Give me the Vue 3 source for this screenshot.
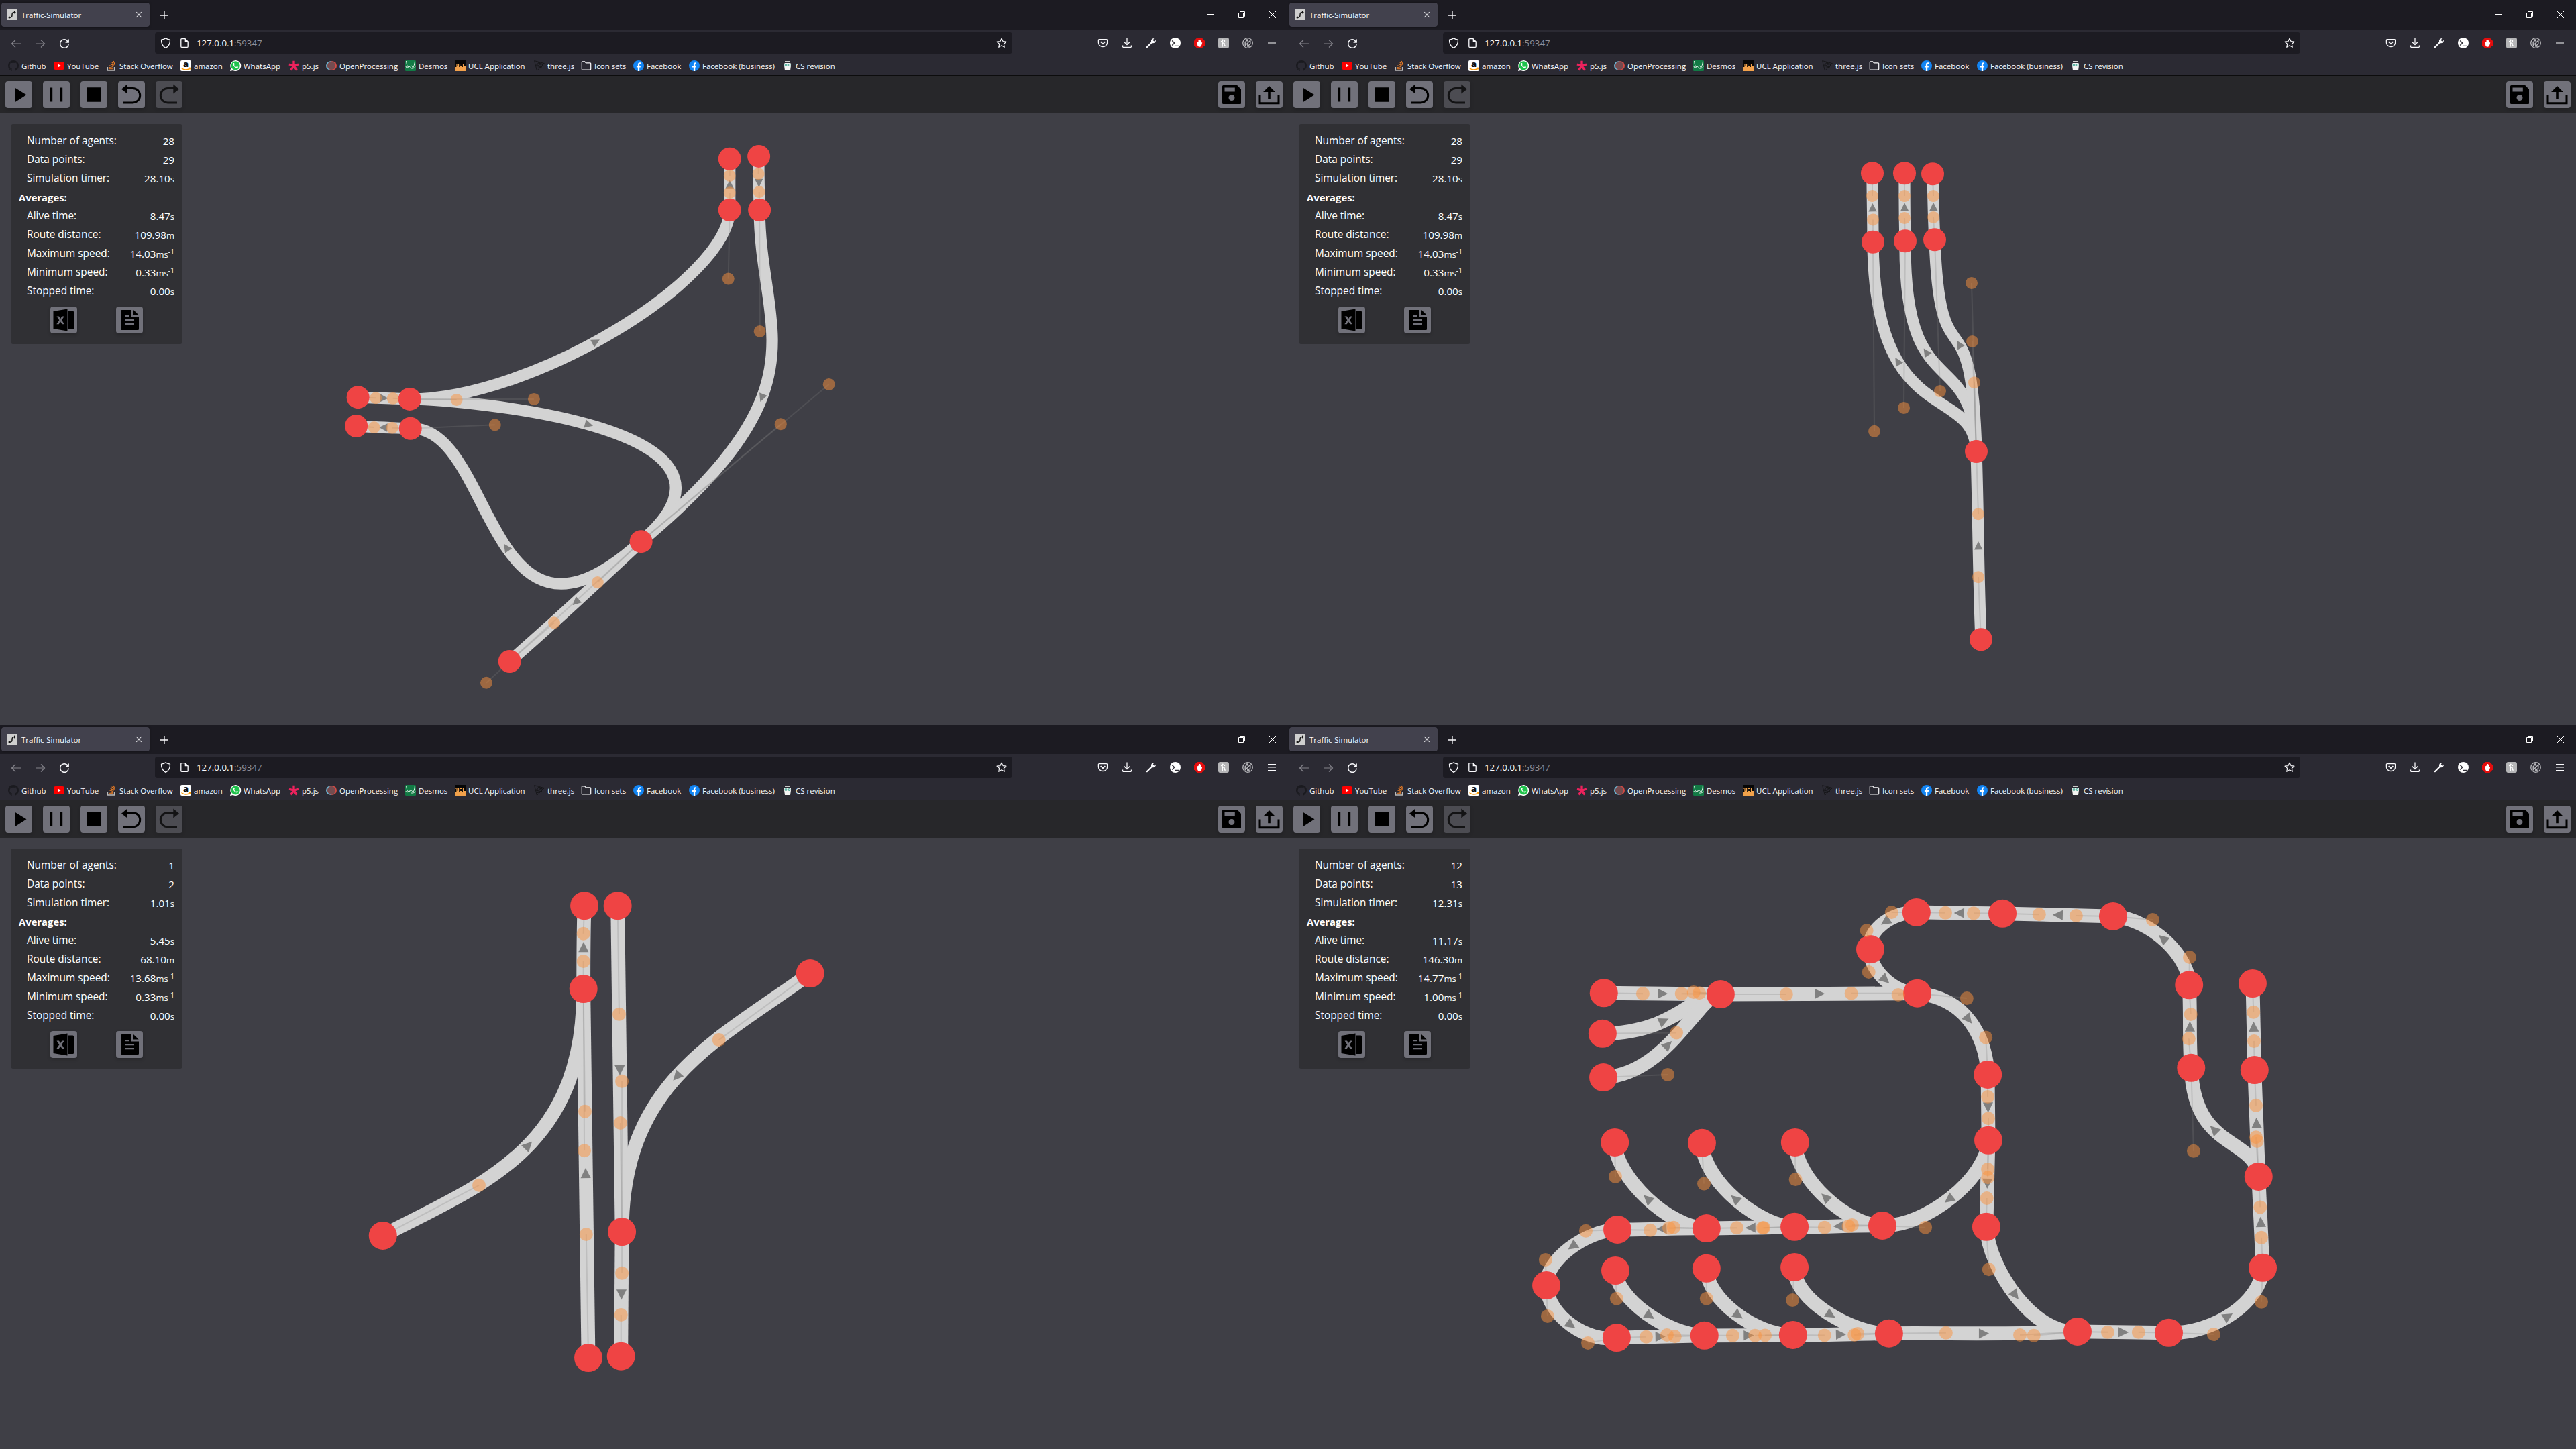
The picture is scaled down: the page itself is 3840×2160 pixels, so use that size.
<script setup>
const tools = ['play', 'pause', 'stop', 'undo', 'redo']
const files = ['save', 'share']
const extensions = ['pocket', 'download', 'wrench', 'terminal', 'block', 'honey', 'link', 'menu']

const bookmarks = [
  { icon: 'github', label: 'Github', width: 68 },
  { icon: 'youtube', label: 'YouTube', width: 78 },
  { icon: 'stack', label: 'Stack Overflow', width: 111 },
  { icon: 'amazon', label: 'amazon', width: 74 },
  { icon: 'whatsapp', label: 'WhatsApp', width: 87 },
  { icon: 'p5', label: 'p5.js', width: 56 },
  { icon: 'openproc', label: 'OpenProcessing', width: 118 },
  { icon: 'desmos', label: 'Desmos', width: 74 },
  { icon: 'ucl', label: 'UCL Application', width: 118 },
  { icon: 'three', label: 'three.js', width: 70 },
  { icon: 'folder', label: 'Icon sets', width: 78 },
  { icon: 'facebook', label: 'Facebook', width: 83 },
  { icon: 'facebook', label: 'Facebook (business)', width: 139 },
  { icon: 'jar', label: 'CS revision', width: 90 },
]

// 16x16 glyphs for the browser chrome, 40x40 glyphs for the application buttons
const icons = {
  favicon: '<rect width="16" height="16" fill="#cfcfcf"/><path d="M4 12.2c4 0 4-1.700 4-4s.3-3.700 3.500-3.700" fill="none" stroke="#151515" stroke-width="1.500"/><circle cx="4" cy="12" r="1.500" fill="#151515"/><path d="M11 2.200l2.800 2.300-2.800 2.300z" fill="#151515"/>',
  close: '<path d="M4.200 4.200l7.600 7.600M11.800 4.200l-7.600 7.600" stroke="#dddde0" stroke-width="1.100" fill="none"/>',
  plus: '<path d="M8 2v12M2 8h12" stroke="#fbfbfe" stroke-width="1.300" fill="none"/>',
  back: '<path d="M15 8H1.500M7 2.500L1.500 8 7 13.500" stroke="#85848b" stroke-width="1.200" fill="none"/>',
  forward: '<path d="M1 8h13.500M9 2.500L14.500 8 9 13.500" stroke="#85848b" stroke-width="1.200" fill="none"/>',
  reload: '<path d="M14.200 8.500A6.300 6.300 0 1 1 12.400 3.600" stroke="#fbfbfe" stroke-width="1.500" fill="none"/><path d="M14.900 1v5.700H9.200z" fill="#fbfbfe"/>',
  shield: '<path d="M8 .9c2 1.300 4.200 2 6.500 2.200C14.700 8.600 12.600 13 8 15.400 3.400 13 1.300 8.600 1.500 3.100 3.800 2.900 6 2.200 8 .9z" stroke="#fbfbfe" stroke-width="1.300" fill="none" stroke-linejoin="round"/>',
  page: '<path d="M9 1.700H3.800a1 1 0 0 0-1 1v10.600a1 1 0 0 0 1 1h8.400a1 1 0 0 0 1-1V6z" stroke="#fbfbfe" stroke-width="1.300" fill="none"/><path d="M8.700 1.300l5 5h-5z" fill="#fbfbfe"/>',
  star: '<path d="M8 1.200l2.050 4.400 4.850.6-3.600 3.250.95 4.800L8 11.850l-4.250 2.400.95-4.800L1.100 6.200l4.850-.6z" stroke="#fbfbfe" stroke-width="1.200" fill="none" stroke-linejoin="round"/>',
  pocket: '<path d="M2.600 2.600h10.800a1.200 1.200 0 0 1 1.200 1.200v3.600a6.600 6.100 0 0 1-13.200 0V3.800a1.200 1.200 0 0 1 1.200-1.200z" stroke="#fbfbfe" stroke-width="1.300" fill="none"/><path d="M4.600 6.200L8 9.400l3.400-3.200" stroke="#fbfbfe" stroke-width="1.600" fill="none"/>',
  download: '<path d="M8 .5v10M3.500 6.300L8 10.700l4.500-4.400" stroke="#fbfbfe" stroke-width="1.300" fill="none"/><path d="M1.600 11.500v1.700a1.200 1.200 0 0 0 1.200 1.200h10.400a1.200 1.200 0 0 0 1.200-1.200v-1.700" stroke="#fbfbfe" stroke-width="1.300" fill="none"/>',
  wrench: '<path d="M1.800 14.200L9 7" stroke="#fbfbfe" stroke-width="2.200" stroke-linecap="round" fill="none"/><path d="M12.300 1a4.200 4.200 0 0 0-4.200 5.500L10 8.200A4.200 4.200 0 0 0 15 3.800L12.500 5.500 10.700 3.900z" fill="#fbfbfe"/>',
  terminal: '<circle cx="8" cy="8" r="8" fill="#fff"/><path d="M3.200 4.500L6.700 8l-3.500 3.500M8 12.400h5" stroke="#2b2a33" stroke-width="1.400" fill="none"/>',
  block: '<path d="M4.700 0h6.600L16 4.700v6.600L11.300 16H4.700L0 11.300V4.700z" fill="#e40d0d"/><path d="M5 6.200V10c0 2.500 1.300 3.700 3.200 3.700S11 12.400 11.400 10.500l.9-3-1-.4-.8 1.400V4.200H9.300V3H7.900v1H6.500v2z" fill="#fff"/>',
  honey: '<rect width="16" height="16" rx="3" fill="#b5b5b7"/><path d="M4 5.500c2 .5 4-2 2.800-2.400C5.600 2.800 6.500 9 6.300 12.800M6.300 9.500c.6-2 3.200-2.200 3 0-.2 2 .2 3.500 2.300 2M5 12.800h2M9.500 4v2" stroke="#fff" stroke-width="1.200" fill="none"/>',
  link: '<circle cx="8" cy="8" r="7.300" fill="none" stroke="#b9b9bd" stroke-width="1.300"/><path d="M4.200 11V6.800L7.800 3.200M5 3h3.200v3.200M11.800 5v4.200l-3.600 3.600M11 13H7.800V9.800M3.500 12.500l9-9" stroke="#b9b9bd" stroke-width="1.400" fill="none"/>',
  menu: '<path d="M2 3.500h12M2 8h12M2 12.500h12" stroke="#fbfbfe" stroke-width="1.200" fill="none"/>',
  minimise: '<path d="M3 7.500h10" stroke="#fff" stroke-width="1" fill="none"/>',
  restore: '<path d="M3.500 5.500h7v7h-7zM5.500 5.500v-2h7v7h-2" stroke="#fff" stroke-width="1" fill="none"/>',
  exit: '<path d="M3 3l10 10M13 3L3 13" stroke="#fff" stroke-width="1" fill="none"/>',
  github: '<circle cx="8" cy="8" r="8" fill="#1a1a1f"/><path d="M5.900 16v-3.500C1.600 11.700 2.200 7 3.500 5.300 3 3.500 4 2.900 5.800 4c1.500-.4 2.900-.4 4.400 0 1.800-1.100 2.800-.5 2.300 1.300 1.300 1.700 1.900 6.400-2.400 7.200V16z" fill="#2b2a33"/><path d="M5.900 14c-2 .4-2.300-1.300-3.200-1.600" stroke="#2b2a33" stroke-width="1" fill="none"/>',
  youtube: '<rect y="2" width="16" height="12" rx="3" fill="#f00"/><path d="M6.300 5.500L10.800 8l-4.500 2.500z" fill="#fff"/>',
  stack: '<path d="M2.500 10v5h10v-5" stroke="#bcbbbb" stroke-width="1.300" fill="none"/><path d="M4.500 12.800h6.200M4.600 10.500l6.100 1M5.200 7.800l5.800 2M6.700 5l5 3.300M8.600 2.600l3.900 4.400M11.200 1l1.800 4.700" stroke="#f48024" stroke-width="1.100" fill="none"/>',
  amazon: '<rect width="16" height="16" rx="2" fill="#fff"/><text x="8" y="9.800" text-anchor="middle" font-family="Open Sans, sans-serif" font-weight="800" font-size="13" fill="#111">a</text><path d="M1.500 11.500c4 3.300 9 3.300 12.300.6M12 11.200l2.400.2-.5 2.300" stroke="#f90" stroke-width="1.500" fill="none"/>',
  whatsapp: '<path d="M0 16l1.200-4.200A8 8 0 1 1 4.300 15z" fill="#fff"/><circle cx="8.100" cy="7.900" r="6.600" fill="#1fc24c"/><path d="M5 4.200c.8-.6 1.200-.3 1.800 1.500L6 6.900c.7 1.500 1.700 2.300 3.200 3l1-1.100c1.800.7 2.100 1 1.500 1.900C9.500 13.500 3 8 5 4.200z" fill="#fff"/>',
  p5: '<path d="M8 8.300V.8M8 8.300l7-2.300M8 8.300l4.400 6.200M8 8.300l-4.400 6.200M8 8.300L1 6" stroke="#ed225d" stroke-width="3.300" fill="none"/>',
  openproc: '<circle cx="6.800" cy="8" r="6.800" fill="#69b5d3"/><circle cx="9.200" cy="8" r="6.800" fill="#d64a44"/><circle cx="8" cy="8" r="6.100" fill="#744c50"/>',
  desmos: '<rect width="16" height="16" rx="1.500" fill="#127a45"/><path d="M1.500 1c1 7 2.500 10 4 9s3.500-3.500 5-.5 3 3 4.500-.5M14.500 1c-1 8-3 12-5 11S6 7 4.500 9.500 2 12 1 9" stroke="#e6f4ec" stroke-width="1" fill="none"/>',
  ucl: '<rect width="16" height="16" fill="#f2a14b"/><rect width="16" height="10" fill="#060606"/><path d="M1 5v1M3 5v4.300h2.500V5M10 5.500H7.500v4H10M12.500 5v4.500H16" stroke="#f2a14b" stroke-width="1.200" fill="none"/>',
  three: '<path d="M.6.600l14.800 4L4.400 15.400zM8 2.600L11.700 10 2.500 8zM4.300 1.600l1 7 6.500-5M6 3.500l7 3M3.500 12l8-2M9.800 3.600L13 7" fill="none" stroke="#17171a" stroke-width="1"/>',
  folder: '<path d="M1.300 13V2.800a1 1 0 0 1 1-1h3.300l1.800 2h6.300a1 1 0 0 1 1 1V13a1 1 0 0 1-1 1H2.300a1 1 0 0 1-1-1z" fill="none" stroke="#fbfbfe" stroke-width="1.200"/>',
  facebook: '<circle cx="8" cy="8" r="8" fill="#1285f5"/><path d="M6.900 16v-5.600H4.900V8h2V6.200c0-2.200 1.300-3.300 4.100-2.900v2C9.500 5.200 9.200 5.600 9.200 6.400V8h1.900l-.4 2.400H9.200V16z" fill="#fff"/>',
  jar: '<path d="M4 1h8v2H4z" fill="#c9c9c9"/><path d="M4 4h8c1.500 1 1 2 1 4l-1 7H4L3 8c0-2-.5-3 1-4z" fill="#f4f4f4"/><circle cx="5.500" cy="7" r="2" fill="#4fae9c"/><circle cx="10.500" cy="7" r="2" fill="#4fae9c"/><circle cx="5.500" cy="7" r=".8" fill="#fff"/><circle cx="10.500" cy="7" r=".8" fill="#fff"/>',
  play: '<path d="M14 9.500v22L31.500 20.300z"/>',
  pause: '<path d="M12.500 9.500v21M27.500 9.500v21" stroke="#000" stroke-width="3.400"/>',
  stop: '<rect x="9.300" y="9.300" width="21.500" height="21.500" rx="1"/>',
  undo: '<path d="M12 10.500H22a10.700 10.700 0 0 1 0 21.400H8" fill="none" stroke="#000" stroke-width="3"/><path d="M13.700 4.500v14L5 11.700z"/>',
  redo: '<path d="M28 10.500H18a10.700 10.700 0 0 0 0 21.400h14" fill="none" stroke="#000" stroke-width="3"/><path d="M26.300 4.500v14l8.700-6.800z"/>',
  save: '<path fill-rule="evenodd" d="M7.500 6h20.700l5.800 6v21a1 1 0 0 1-1 1H7.500a1.500 1.500 0 0 1-1.500-1.500v-25A1.500 1.500 0 0 1 7.500 6zM9.500 9.500v6h15.300v-6zM20 20a4.500 4.500 0 1 0 0 9 4.500 4.500 0 0 0 0-9z"/>',
  share: '<path d="M6 20.500v12.300h28V20.500" fill="none" stroke="#000" stroke-width="3"/><path d="M20 7l9 9h-7.200v10.200h-3.600V16H11z"/>',
  excel: '<path fill-rule="evenodd" d="M25.500 3.500v33L4.500 33V7zM9.500 14.500l3.800 5.800-4 6h3.500l2.300-3.900 2.400 3.900h3.500l-4-6 3.800-5.800h-3.400l-2.200 3.600-2.200-3.600z"/><path d="M27 6.500h6.500a1.500 1.500 0 0 1 1.500 1.500v24.500a1.500 1.500 0 0 1-1.500 1.500H27z"/>',
  report: '<path fill-rule="evenodd" d="M8.500 5h14v10.500H34V33.500a1.500 1.500 0 0 1-1.500 1.500H8.500A1.500 1.500 0 0 1 7 33.500v-27A1.500 1.500 0 0 1 8.500 5zM14 13v2.300h5V13zM14 19v2.300h13V19zM14 25v2.300h13V25z"/><path d="M26 5l7.700 7.500H26z"/>',
}

// Every scene stores its own drawing grid: origin and units per screen pixel.
// A road is [from, control 1, control 2, to]; traffic flows from the first to the last.
const scenes = [
  {
    stats: ['28', '29', '28.10', '8.47', '109.98', '14.03', '0.33', '0.00'],
    origin: [500, 200], unit: [1.96, 1.8233], node: 17, handle: 9, road: 17.2, arrow: 12.4,
    nodes: {
      a: [66, 715], b: [217, 720], c: [61, 793], d: [219, 800], e: [1152, 67], f: [1152, 206],
      g: [1237, 60], h: [1239, 206], i: [893, 1107], j: [509, 1433],
    },
    roads: [
      ['a', [118, 717], [168, 718], 'b'],
      ['d', [166, 798], [113, 797], 'c'],
      ['f', [1152, 159], [1152, 113], 'e'],
      ['g', [1236, 108], [1238, 157], 'h'],
      ['b', [580, 720], [1148, 393], 'f'],
      ['b', [354, 722], [1301, 788], 'i'],
      ['h', [1240, 536], [1442, 680], 'i'],
      ['i', [441, 1491], [466, 790], 'd'],
      ['i', [766, 1218], [639, 1328], 'j'],
    ],
  },
  {
    stats: ['28', '29', '28.10', '8.47', '109.98', '14.03', '0.33', '0.00'],
    origin: [780, 210], unit: [3, 2.0103], node: 17, handle: 9, road: 17.2, arrow: 12.4,
    nodes: {
      a: [273, 97], b: [276, 303], c: [417, 97], d: [420, 300], e: [543, 99], f: [552, 296],
      g: [738, 931], h: [759, 1494],
    },
    roads: [
      ['b', [276, 236], [273, 165], 'a'],
      ['d', [417, 231], [417, 165], 'c'],
      ['f', [546, 229], [546, 165], 'e'],
      ['h', [747, 1307], [747, 1118], 'g'],
      ['g', [729, 724], [282, 870], 'b'],
      ['g', [720, 601], [414, 800], 'd'],
      ['g', [717, 426], [576, 750], 'f'],
    ],
  },
  {
    stats: ['1', '2', '1.01', '5.45', '68.10', '13.68', '0.33', '0.00'],
    origin: [540, 230], unit: [2.1778, 2.0907], node: 21, handle: 10, road: 20.8, arrow: 15.2,
    nodes: {
      a: [721, 84], b: [718, 343], c: [829, 84], d: [1454, 295], e: [67, 1112], f: [843, 1100],
      g: [734, 1493], h: [840, 1488],
    },
    roads: [
      ['b', [718, 257], [718, 171], 'a'],
      ['g', [727, 1108], [723, 725], 'b'],
      ['e', [379, 955], [721, 847], 'b'],
      ['c', [834, 422], [838, 761], 'f'],
      ['d', [1158, 502], [843, 631], 'f'],
      ['f', [843, 1229], [840, 1359], 'h'],
    ],
  },
  {
    stats: ['12', '13', '12.31', '11.17', '146.30', '14.77', '1.00', '0.00'],
    origin: [320, 240], unit: [2.6133, 2.1778], node: 21, handle: 10, road: 20.8, arrow: 15.2,
    nodes: {
      m1: [394, 349], m2: [389, 481], m3: [392, 623], m4: [849, 353], m5: [1432, 207],
      m6: [437, 834], m7: [776, 836], m8: [1139, 834], m9: [447, 1117], m10: [794, 1113],
      m11: [1137, 1108], m13: [170, 1298], m14: [439, 1250], m15: [794, 1243], m16: [1137, 1239],
      m17: [444, 1468], m18: [786, 1461], m19: [1131, 1459],
      n1: [1612, 87], n2: [1947, 91], n3: [2378, 100], n4: [2674, 323], n5: [2682, 592],
      n6: [2921.5, 318], n7: [2929, 599], n8: [2944.6, 945], n9: [2961, 1241], n10: [2595, 1452],
      n11: [2239.5, 1448], n12: [1505, 1454], n13: [1884, 1108], n14: [1892, 827],
      n15: [1890, 614], n16: [1615, 350], n17: [1479, 1104],
    },
    roads: [
      ['m1', [546, 351], [697, 351], 'm4'],
      ['m2', [677, 478], [744, 346], 'm4'],
      ['m3', [643, 614], [766, 349], 'm4'],
      ['m4', [1105, 353], [1358, 350], 'n16'],
      ['m5', [1426, 281], [1541, 355], 'n16'],
      ['n1', [1515, 87], [1418, 146], 'm5'],
      ['n2', [1834.7, 90], [1724.7, 89], 'n1'],
      ['n3', [2234, 98], [2090, 94], 'n2'],
      ['n4', [2676, 233], [2532, 111], 'n3'],
      ['n5', [2673, 497], [2680.6, 418], 'n4'],
      ['n8', [2934.7, 817], [2691.6, 862], 'n5'],
      ['n8', [2939, 830], [2934.7, 714], 'n7'],
      ['n7', [2927, 505], [2925, 411], 'n6'],
      ['n9', [2955.6, 1143], [2951, 1044], 'n8'],
      ['n10', [2769.7, 1457], [2955.6, 1352], 'n9'],
      ['n11', [2357, 1450], [2477, 1450], 'n10'],
      ['n12', [1727, 1452], [2015, 1459], 'n11'],
      ['n13', [1894, 1246], [2069, 1461], 'n11'],
      ['n14', [1889.7, 921], [1886, 1015], 'n13'],
      ['n14', [1889.7, 948], [1646.6, 1110], 'n17'],
      ['n15', [1889.7, 686], [1892, 756], 'n14'],
      ['n16', [1808, 366], [1882, 493], 'n15'],
      ['n17', [1361, 1102], [1254, 1110], 'm11'],
      ['n17', [1347, 1106], [1141, 954], 'm8'],
      ['m11', [1017, 1111], [912, 1111], 'm10'],
      ['m11', [1013, 1111], [784, 968], 'm7'],
      ['m10', [666, 1110], [575, 1119], 'm9'],
      ['m10', [648, 1112], [439, 945], 'm6'],
      ['m9', [324, 1121], [167, 1215], 'm13'],
      ['m13', [175, 1398], [332, 1485], 'm17'],
      ['m17', [559, 1465], [671, 1464], 'm18'],
      ['m14', [444, 1341], [640, 1459], 'm18'],
      ['m18', [896, 1461], [1022, 1460], 'm19'],
      ['m15', [794, 1341], [983, 1461], 'm19'],
      ['m19', [1254, 1460], [1383, 1455], 'n12'],
      ['m16', [1129, 1346], [1370, 1459], 'n12'],
    ],
  },
]

const bezier = (p, t) => {
  const u = 1 - t
  return [0, 1].map(
    (k) => u * u * u * p[0][k] + 3 * u * u * t * p[1][k] + 3 * u * t * t * p[2][k] + t * t * t * p[3][k],
  )
}

// Position and heading half way along the curve, measured by arc length
function midpoint(p) {
  const steps = 200
  const pts = Array.from({ length: steps + 1 }, (_, n) => bezier(p, n / steps))
  const lengths = [0]
  for (let n = 1; n <= steps; n++) {
    lengths.push(lengths[n - 1] + Math.hypot(pts[n][0] - pts[n - 1][0], pts[n][1] - pts[n - 1][1]))
  }
  const n = Math.max(1, lengths.findIndex((l) => l >= lengths[steps] / 2))
  const heading = Math.atan2(pts[n][1] - pts[n - 1][1], pts[n][0] - pts[n - 1][0])
  return { x: pts[n][0], y: pts[n][1], deg: (heading * 180) / Math.PI }
}

const rows = [
  ['Number of agents:', ''],
  ['Data points:', ''],
  ['Simulation timer:', 's'],
  ['Alive time:', 's'],
  ['Route distance:', 'm'],
  ['Maximum speed:', 'ms', '-1'],
  ['Minimum speed:', 'ms', '-1'],
  ['Stopped time:', 's'],
]

const windows = scenes.map((s) => {
  const place = (p) => [s.origin[0] + p[0] / s.unit[0], s.origin[1] + p[1] / s.unit[1]]
  const roads = s.roads.map(([from, c1, c2, to]) => {
    const p = [s.nodes[from], c1, c2, s.nodes[to]].map(place)
    return { p, d: `M${p[0]}C${p[1]} ${p[2]} ${p[3]}`, arrow: midpoint(p) }
  })
  const h = s.arrow / 2
  const stats = rows.map(([label, unit, power], i) => ({ label, unit, power, value: s.stats[i] }))
  return {
    ...s,
    paths: roads,
    points: Object.values(s.nodes).map(place),
    tip: `${h},0 ${-h},${-h} ${-h},${h}`,
    totals: stats.slice(0, 3),
    averages: stats.slice(3),
  }
})
</script>

<template>
  <main class="desktop">
    <section v-for="(w, i) in windows" :key="i" class="window">
      <header class="tabs">
        <div class="tab">
          <svg class="icon" viewBox="0 0 16 16" v-html="icons.favicon" />
          <span class="title">Traffic-Simulator</span>
          <svg class="icon" viewBox="0 0 16 16" v-html="icons.close" />
        </div>
        <svg class="icon add" viewBox="0 0 16 16" v-html="icons.plus" />
        <div class="controls">
          <svg v-for="c in ['minimise', 'restore', 'exit']" :key="c" class="icon" viewBox="0 0 16 16" v-html="icons[c]" />
        </div>
      </header>

      <nav class="navbar">
        <div class="history">
          <svg v-for="c in ['back', 'forward', 'reload']" :key="c" class="icon" viewBox="0 0 16 16" v-html="icons[c]" />
        </div>
        <div class="url">
          <svg class="icon" viewBox="0 0 16 16" v-html="icons.shield" />
          <svg class="icon page" viewBox="0 0 16 16" v-html="icons.page" />
          <span class="address">127.0.0.1<span class="port">:59347</span></span>
          <svg class="icon" viewBox="0 0 16 16" v-html="icons.star" />
        </div>
        <div class="extensions">
          <svg v-for="c in extensions" :key="c" class="icon" viewBox="0 0 16 16" v-html="icons[c]" />
        </div>
      </nav>

      <div class="bookmarks">
        <div v-for="b in bookmarks" :key="b.label" class="bookmark" :style="{ width: b.width + 'px' }">
          <svg class="icon" viewBox="0 0 16 16" v-html="icons[b.icon]" />
          <span>{{ b.label }}</span>
        </div>
      </div>

      <div class="toolbar">
        <div class="group">
          <button v-for="t in tools" :key="t" class="tool" :class="{ disabled: t === 'redo' }">
            <svg viewBox="0 0 40 40" v-html="icons[t]" />
          </button>
        </div>
        <div class="group">
          <button v-for="t in files" :key="t" class="tool">
            <svg viewBox="0 0 40 40" v-html="icons[t]" />
          </button>
        </div>
      </div>

      <div class="canvas">
        <svg class="scene" viewBox="0 169 1920 911">
          <path v-for="(r, n) in w.paths" :key="n" :d="r.d" class="road" :stroke-width="w.road" />
          <polygon
            v-for="(r, n) in w.paths"
            :key="n"
            :points="w.tip"
            class="arrow"
            :transform="`translate(${r.arrow.x} ${r.arrow.y}) rotate(${r.arrow.deg})`"
          />
          <g v-for="(r, n) in w.paths" :key="n" class="guide">
            <line :x1="r.p[0][0]" :y1="r.p[0][1]" :x2="r.p[1][0]" :y2="r.p[1][1]" />
            <line :x1="r.p[3][0]" :y1="r.p[3][1]" :x2="r.p[2][0]" :y2="r.p[2][1]" />
          </g>
          <circle v-for="(p, n) in w.points" :key="n" class="node" :cx="p[0]" :cy="p[1]" :r="w.node" />
          <g v-for="(r, n) in w.paths" :key="n" class="handle">
            <circle :cx="r.p[1][0]" :cy="r.p[1][1]" :r="w.handle" />
            <circle :cx="r.p[2][0]" :cy="r.p[2][1]" :r="w.handle" />
          </g>
        </svg>

        <aside class="panel">
          <div v-for="s in w.totals" :key="s.label" class="row">
            <span class="name">{{ s.label }}</span>
            <span>{{ s.value }}<small>{{ s.unit }}</small></span>
          </div>
          <h2>Averages:</h2>
          <div v-for="s in w.averages" :key="s.label" class="row">
            <span class="name">{{ s.label }}</span>
            <span>{{ s.value }}<small>{{ s.unit }}<sup v-if="s.power">{{ s.power }}</sup></small></span>
          </div>
          <div class="exports">
            <button class="tool"><svg viewBox="0 0 40 40" v-html="icons.excel" /></button>
            <button class="tool"><svg viewBox="0 0 40 40" v-html="icons.report" /></button>
          </div>
        </aside>
      </div>
    </section>
  </main>
</template>

<style>
html,
body {
  margin: 0;
  background: #3f3f46;
}
</style>

<style scoped>
.desktop {
  display: grid;
  grid-template-columns: 1920px 1920px;
  grid-template-rows: 1080px 1080px;
  width: 3840px;
  height: 2160px;
  overflow: hidden;
  font-family: 'Open Sans', 'Noto Sans', sans-serif;
  color: #fbfbfe;
}
.window {
  display: flex;
  flex-direction: column;
  overflow: hidden;
}
.icon {
  width: 16px;
  height: 16px;
  flex: none;
  display: block;
  overflow: visible;
}
.tabs {
  height: 44px;
  flex: none;
  display: flex;
  align-items: center;
  background: #1c1b22;
}
.tab {
  box-sizing: border-box;
  width: 221px;
  height: 36px;
  margin-left: 2px;
  padding: 0 8px;
  display: flex;
  align-items: center;
  border-radius: 4px;
  background: #42414d;
  box-shadow: 0 0 3px rgba(0, 0, 0, 0.5);
  font-size: 11.5px;
}
.title {
  flex: 1;
  margin-left: 6px;
}
.add {
  margin: 1px 0 0 14px;
}
.controls {
  margin-left: auto;
  margin-right: 15px;
  display: flex;
  gap: 30px;
}
.navbar {
  height: 40px;
  flex: none;
  display: flex;
  align-items: center;
  background: #2b2a33;
}
.history {
  display: flex;
  gap: 20px;
  margin: 2px 127px 0 16px;
}
.url {
  box-sizing: border-box;
  width: 1278px;
  height: 32px;
  padding: 0 8px;
  display: flex;
  align-items: center;
  border-radius: 4px;
  background: #1c1b22;
}
.page {
  margin: 0 10px 0 12px;
}
.address {
  flex: 1;
  font-size: 13.3px;
}
.port {
  color: #8f8f98;
}
.extensions {
  display: flex;
  gap: 20px;
  margin: 0 16px 0 auto;
}
.bookmarks {
  height: 28px;
  flex: none;
  display: flex;
  align-items: center;
  padding-left: 12px;
  background: #2b2a33;
  border-bottom: 1px solid #0c0c0d;
  font-size: 11.5px;
}
.bookmark {
  flex: none;
  display: flex;
  align-items: center;
  gap: 4px;
  white-space: nowrap;
}
.toolbar {
  box-sizing: border-box;
  height: 56px;
  flex: none;
  display: flex;
  justify-content: space-between;
  padding: 8px;
  background: #27272a;
}
.group {
  display: flex;
  gap: 16px;
}
.tool {
  width: 40px;
  height: 40px;
  padding: 0;
  border: 0;
  border-radius: 4px;
  background: #71717a;
  box-shadow: 0 2px 5px rgba(0, 0, 0, 0.22);
}
.tool svg {
  display: block;
  width: 40px;
  height: 40px;
}
.disabled {
  opacity: 0.5;
}
.canvas {
  position: relative;
  flex: 1;
  background: #3f3f46;
}
.scene {
  display: block;
  width: 1920px;
  height: 911px;
}
.road {
  fill: none;
  stroke: #d3d3d3;
}
.arrow {
  fill: #808080;
}
.guide {
  stroke: rgba(128, 128, 128, 0.25);
  stroke-width: 2;
}
.node {
  fill: #ef4444;
}
.handle {
  fill: rgba(251, 146, 60, 0.5);
}
.panel {
  position: absolute;
  left: 16px;
  top: 16px;
  box-sizing: border-box;
  width: 256px;
  height: 328px;
  padding: 11px 12px 12px;
  border-radius: 4px;
  background: #303034;
  color: #fff;
  font-size: 15.2px;
}
.row {
  display: flex;
  justify-content: space-between;
  height: 28px;
  line-height: 28px;
  padding-left: 12px;
}
.name {
  font-size: 15.4px;
}
.row small {
  font-size: 13px;
}
.row sup {
  font-size: 10.5px;
  line-height: 0;
}
.panel h2 {
  margin: 0;
  height: 28px;
  line-height: 28px;
  font-size: 14.8px;
  font-weight: 700;
}
.exports {
  display: flex;
  gap: 58px;
  margin: 9px 0 0 47px;
}
</style>
